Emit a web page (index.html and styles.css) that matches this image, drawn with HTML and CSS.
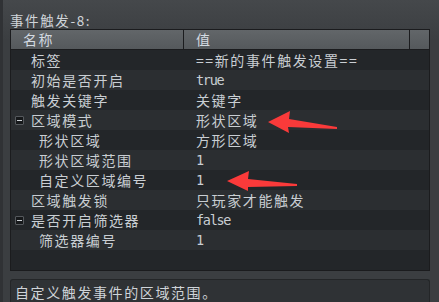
FILE: index.html
```html
<!DOCTYPE html>
<html lang="zh-CN">
<head>
  <meta charset="UTF-8">
  <title>事件触发-8</title>
  <link rel="stylesheet" href="styles.css">
</head>
<body>
  <div class="panel">
    <div class="title">事件触发-8:</div>

    <div class="tree">
      <div class="tree-header">
        <div class="head-cell">名称</div>
        <div class="head-cell">值</div>
        <div class="head-cell corner"></div>
      </div>

      <div class="tree-body">
        <div class="row">
          <div class="name lvl0">标签</div>
          <div class="value">==新的事件触发设置==</div>
        </div>
        <div class="row alt">
          <div class="name lvl0">初始是否开启</div>
          <div class="value latin">true</div>
        </div>
        <div class="row">
          <div class="name lvl0">触发关键字</div>
          <div class="value">关键字</div>
        </div>
        <div class="row alt">
          <div class="name toggle-row"><span class="toggle"></span>区域模式</div>
          <div class="value">形状区域</div>
        </div>
        <div class="row">
          <div class="name lvl1">形状区域</div>
          <div class="value">方形区域</div>
        </div>
        <div class="row alt">
          <div class="name lvl1">形状区域范围</div>
          <div class="value latin">1</div>
        </div>
        <div class="row">
          <div class="name lvl1">自定义区域编号</div>
          <div class="value latin">1</div>
        </div>
        <div class="row alt">
          <div class="name lvl0">区域触发锁</div>
          <div class="value">只玩家才能触发</div>
        </div>
        <div class="row">
          <div class="name toggle-row"><span class="toggle"></span>是否开启筛选器</div>
          <div class="value latin">false</div>
        </div>
        <div class="row alt">
          <div class="name lvl1">筛选器编号</div>
          <div class="value latin">1</div>
        </div>
      </div>
    </div>

    <div class="description">自定义触发事件的区域范围。</div>
  </div>

  <!-- annotation arrows drawn over the screenshot -->
  <svg class="marks" width="439" height="302" viewBox="0 0 439 302">
    <polygon points="268,122 290,111 289,119 337,127 337,129 288,127 289,133" />
    <polygon points="227,181 249,171 248,179 297,184 297,186 248,187 248,191" />
  </svg>
</body>
</html>
```

FILE: styles.css
```css
body {
  margin: 0;
  width: 439px;
  height: 302px;
  overflow: hidden;
  background: linear-gradient(#45484b, #3b3e41 40px);
  font-family: "Noto Sans CJK SC", "DejaVu Sans", sans-serif;
  font-size: 14px;
  letter-spacing: 1.6px;
  color: #c9ced3;
}

.panel {
  border-left: 3px solid #303235;
  height: 302px;
  padding-left: 7px;
  padding-right: 9px;
  box-sizing: border-box;
}

.title {
  height: 29px;
  line-height: 17px;
  padding-top: 12px;
  box-sizing: border-box;
  color: #cfd4d9;
  font-size: 13.5px;
}

.tree {
  border: 1px solid #1b1c1e;
  background-color: #232629;
}

.tree-header {
  display: grid;
  grid-template-columns: 173px 226px 1fr;
  height: 20px;
  background: linear-gradient(#626669, #55595c);
  border-bottom: 1px solid #1b1c1e;
  box-sizing: border-box;
}

.head-cell {
  padding-left: 12px;
  line-height: 19px;
  color: #d3dae1;
  border-right: 1px solid #1b1c1e;
}

.head-cell.corner {
  border-right: none;
  padding-left: 0;
}

.tree-body {
  height: 220px;
}

.row {
  display: grid;
  grid-template-columns: 173px 1fr;
  height: 20px;
  line-height: 20px;
  background-color: #232629;
}

.row.alt {
  background-color: #2b2e31;
}

.name {
  display: flex;
  align-items: center;
  white-space: nowrap;
}

.lvl0 {
  padding-left: 20px;
}

.lvl1 {
  padding-left: 28px;
}

.toggle-row {
  padding-left: 4px;
  gap: 7px;
}

.toggle {
  width: 7px;
  height: 7px;
  border: 1px solid #55595d;
  border-radius: 1px;
  background-color: #17191b;
  position: relative;
  flex-shrink: 0;
}

.toggle::after {
  content: "";
  position: absolute;
  left: 1px;
  top: 3px;
  width: 5px;
  height: 1px;
  background-color: #c9ced3;
}

.value {
  padding-left: 12px;
  white-space: nowrap;
}

.value.latin {
  font-family: "DejaVu Sans Mono", monospace;
  font-size: 13.5px;
  letter-spacing: -1.3px;
}

.description {
  margin-top: 8px;
  height: 23px;
  border: 1px solid #242628;
  border-bottom: none;
  border-radius: 3px 3px 0 0;
  background-color: #2f3235;
  padding: 4px 0 0 4px;
  box-sizing: border-box;
  line-height: 17px;
  color: #cfd4d9;
}

.marks {
  position: absolute;
  top: 0;
  left: 0;
  pointer-events: none;
}

.marks polygon {
  fill: #fa3a3a;
}
```
